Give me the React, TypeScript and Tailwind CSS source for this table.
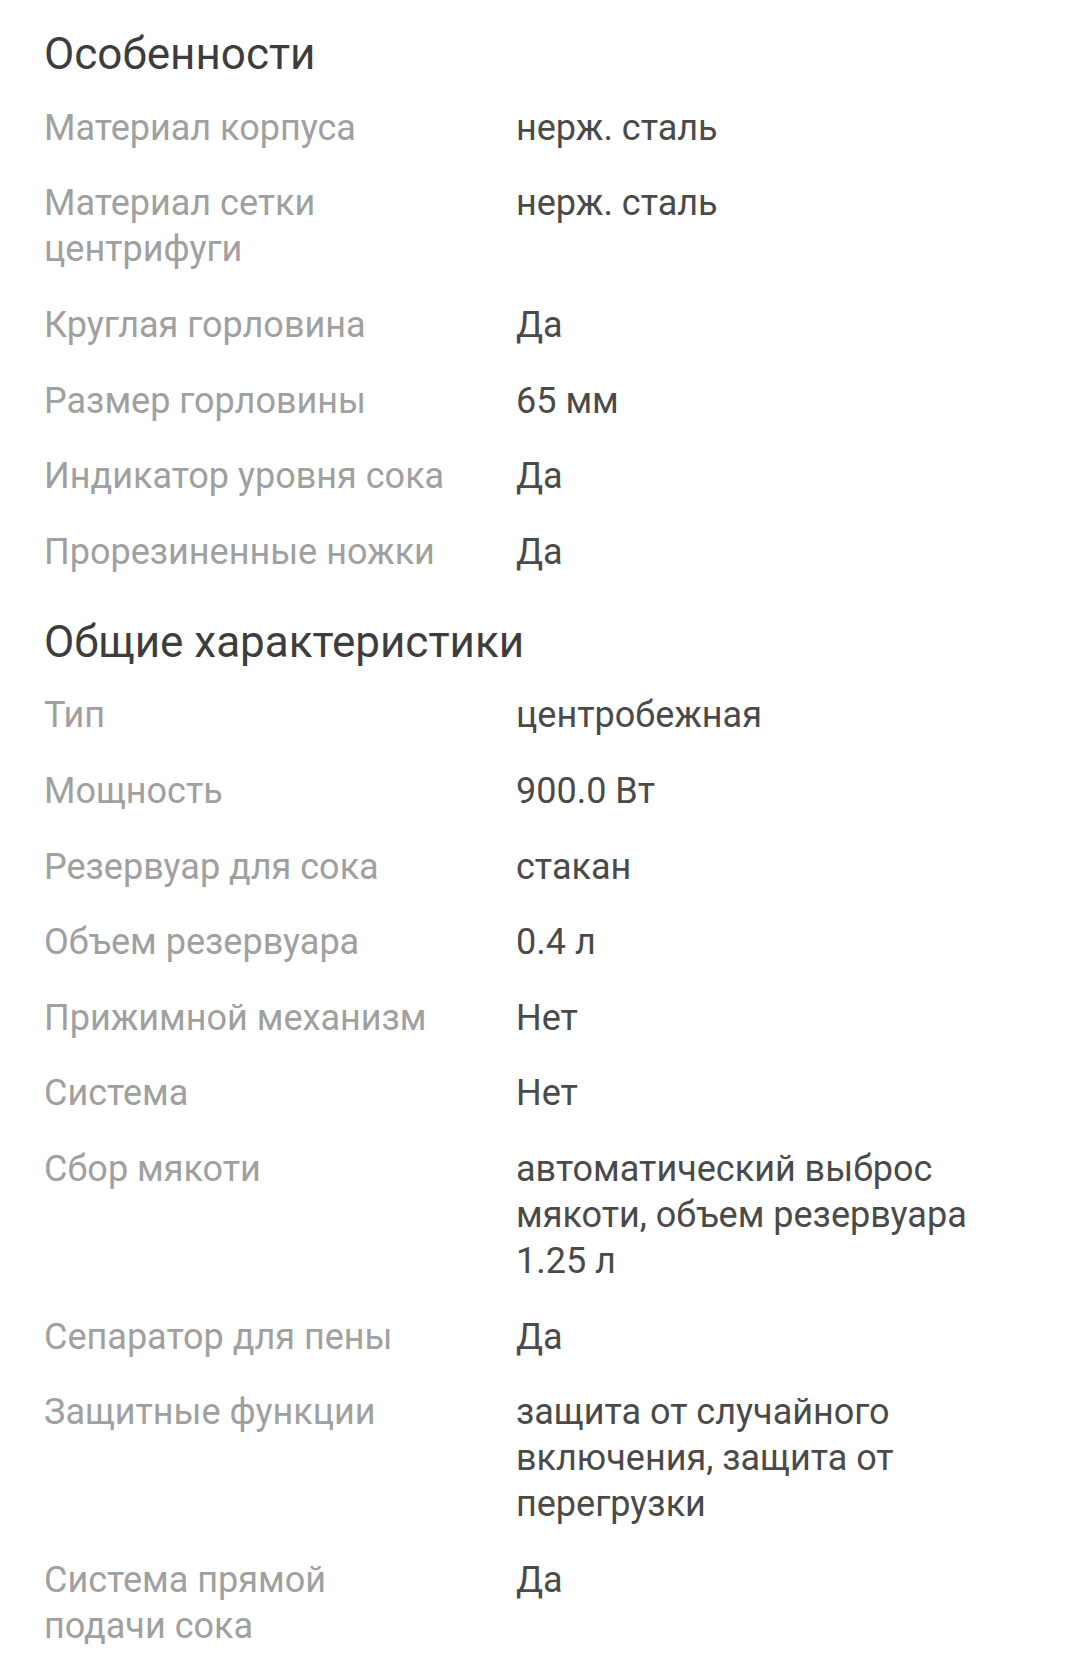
import React from "react";

interface SpecRow {
	label: string;
	value: string;
}

interface SectionType {
	title: string;
	rows: SpecRow[];
}

const sections: SectionType[] = [
	{
		title: "Особенности",
		rows: [
			{ label: "Материал корпуса", value: "нерж. сталь" },
			{ label: "Материал сетки центрифуги", value: "нерж. сталь" },
			{ label: "Круглая горловина", value: "Да" },
			{ label: "Размер горловины", value: "65 мм" },
			{ label: "Индикатор уровня сока", value: "Да" },
			{ label: "Прорезиненные ножки", value: "Да" }
		]
	},
	{
		title: "Общие характеристики",
		rows: [
			{ label: "Тип", value: "центробежная" },
			{ label: "Мощность", value: "900.0 Вт" },
			{ label: "Резервуар для сока", value: "стакан" },
			{ label: "Объем резервуара", value: "0.4 л" },
			{ label: "Прижимной механизм", value: "Нет" },
			{ label: "Система", value: "Нет" },
			{
				label: "Сбор мякоти",
				value: "автоматический выброс мякоти, объем резервуара 1.25 л"
			},
			{ label: "Сепаратор для пены", value: "Да" },
			{
				label: "Защитные функции",
				value: "защита от случайного включения, защита от перегрузки"
			},
			{ label: "Система прямой подачи сока", value: "Да" }
		]
	}
];

const Section: React.FC<SectionType> = ({ title, rows }) => {
	return (
		<div className="mb-[28px]">
			<h2 className="mb-[12px] text-[44px] leading-[48px] font-normal text-[#3d3d3d]">
				{title}
			</h2>
			<div className="flex flex-col">
				{rows.map((row) => (
					<div key={row.label} className="flex py-[14.8px] text-[36px] leading-[46px]">
						<div className="w-[408px] shrink-0 text-[#a0a0a0]">{row.label}</div>
						<div className="ml-[64px] w-[490px] text-[#4a4a4a]">{row.value}</div>
					</div>
				))}
			</div>
		</div>
	);
};

export default function App() {
	return (
		<div
			className="min-h-screen bg-white px-[44px] pt-[30px]"
			style={{ fontFamily: "Roboto, 'Noto Sans', sans-serif" }}
		>
			{sections.map((s) => (
				<Section key={s.title} title={s.title} rows={s.rows} />
			))}
		</div>
	);
}
